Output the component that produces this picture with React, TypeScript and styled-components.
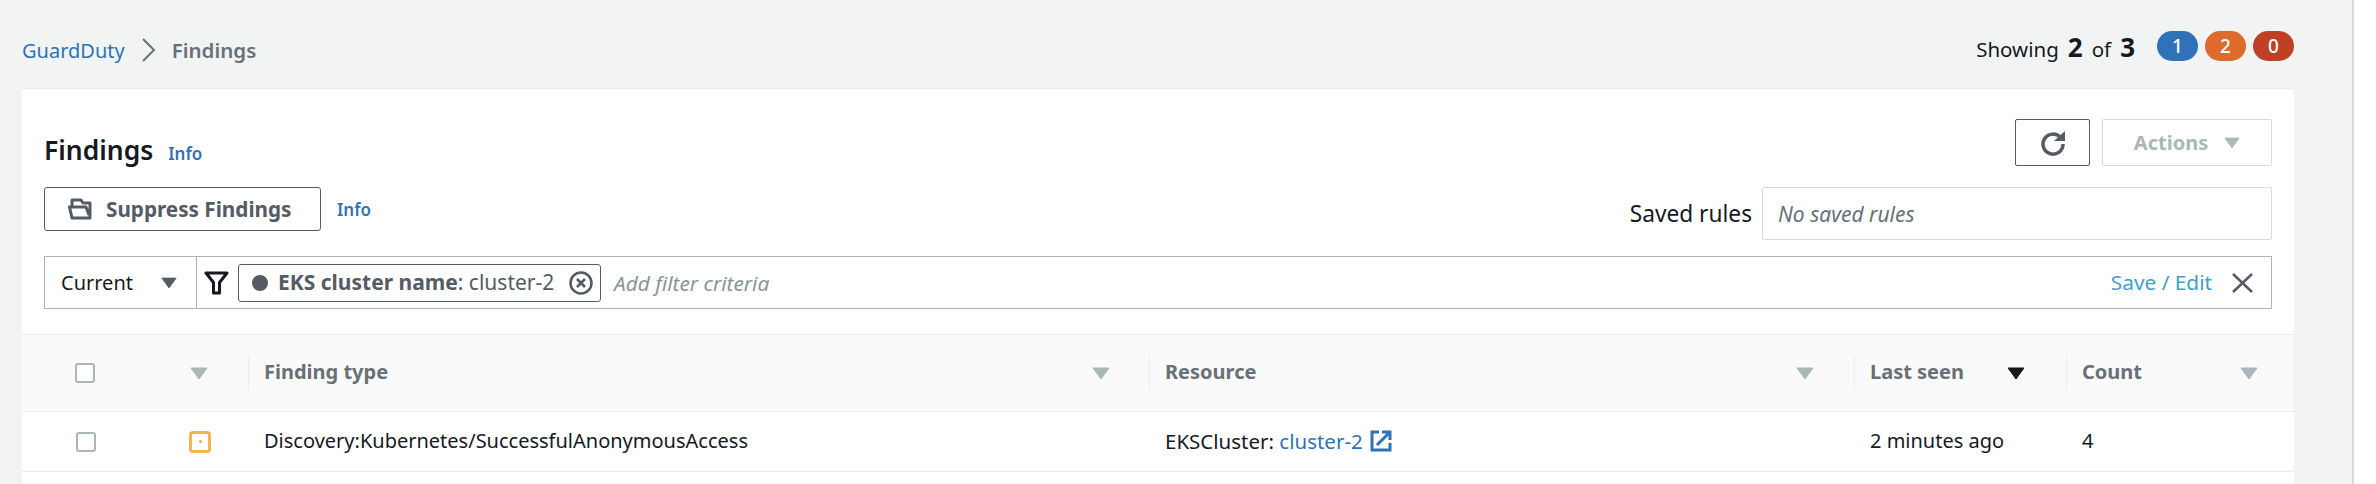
import React from 'react';
import styled, { createGlobalStyle } from 'styled-components';

const GlobalStyle = createGlobalStyle`
  html, body {
    margin: 0;
    height: 484px;
    overflow: hidden;
    background: #fff;
    font-family: "Noto Sans", "Open Sans", sans-serif;
    font-size: 20px;
    color: #16191f;
  }
  * { box-sizing: border-box; }
`;

const COLUMNS = '148px 78px 901px 705px 212px 228px';

const Page = styled.div`
  display: flex;
  width: 2376px;
  height: 484px;
  overflow: hidden;
`;

const Main = styled.main`
  width: 2354px;
  padding: 0 58px 0 22px;
  background: #f2f3f3;
  border-right: 2px solid #d5dbdb;
`;

const TopBar = styled.header`
  height: 88px;
  display: flex;
  justify-content: space-between;
  padding-top: 31px;
`;

const Breadcrumbs = styled.nav`
  display: flex;
  align-items: center;
  height: 38px;
  gap: 16px;
`;

const Link = styled.a`
  color: #2f72b8;
`;

const Current = styled.span`
  color: #687078;
  font-size: 20.5px;
  font-weight: 600;
`;

const Summary = styled.div`
  display: flex;
  align-items: flex-start;
  height: 30px;
`;

const Showing = styled.div`
  display: flex;
  align-items: baseline;
  gap: 9px;
  margin-top: 1px;
  margin-right: 22px;
  font-size: 20.5px;
  line-height: 30px;
  b { font-size: 26px; font-weight: 700; }
`;

const Badge = styled.span<{ $bg: string }>`
  width: 41px;
  height: 30px;
  margin-left: 7px;
  border-radius: 15px;
  background: ${({ $bg }) => $bg};
  color: #fff;
  font-size: 19px;
  font-weight: 500;
  display: flex;
  align-items: center;
  justify-content: center;
  &:first-of-type { margin-left: 0; }
`;

const Panel = styled.section`
  height: 396px;
  background: #fff;
  border-top: 1px solid #eaeded;
`;

const PanelHead = styled.div`
  padding: 30px 22px 25px;
  display: flex;
  flex-direction: column;
`;

const TitleRow = styled.div`
  display: flex;
  justify-content: space-between;
  align-items: center;
  height: 47px;
  margin-bottom: 21px;
`;

const TitleWrap = styled.div`
  display: flex;
  align-items: baseline;
  gap: 15px;
  padding-top: 15px;
`;

const Title = styled.h1`
  margin: 0;
  font-size: 26.5px;
  font-weight: 600;
`;

const InfoLink = styled(Link)`
  font-size: 17px;
  font-weight: 600;
`;

const Actions = styled.div`
  display: flex;
  gap: 12px;
`;

const IconButton = styled.button`
  width: 75px;
  height: 47px;
  padding: 0;
  background: #fff;
  border: 1px solid #545b64;
  border-radius: 2px;
  display: flex;
  align-items: center;
  justify-content: center;
`;

const DisabledButton = styled.button`
  width: 170px;
  height: 47px;
  background: #fff;
  border: 1px solid #d5dbdb;
  border-radius: 2px;
  color: #aab7b8;
  font: 700 20px "Noto Sans", sans-serif;
  display: flex;
  align-items: center;
  justify-content: center;
  gap: 16px;
`;

const ToolRow = styled.div`
  display: flex;
  justify-content: space-between;
  align-items: flex-start;
  height: 53px;
  margin-bottom: 16px;
`;

const SuppressWrap = styled.div`
  display: flex;
  align-items: center;
  height: 44px;
  gap: 16px;
`;

const SuppressButton = styled.button`
  width: 277px;
  height: 44px;
  padding: 0 0 0 23px;
  background: #fff;
  border: 1px solid #545b64;
  border-radius: 3px;
  color: #545b64;
  font: 700 20.7px "Noto Sans", sans-serif;
  display: flex;
  align-items: center;
  gap: 14px;
`;

const SavedRules = styled.div`
  display: flex;
  align-items: center;
  gap: 10px;
  font-size: 22.7px;
`;

const RulesInput = styled.div`
  width: 510px;
  height: 53px;
  padding-left: 15px;
  border: 1px solid #d5dbdb;
  border-radius: 2px;
  color: #687078;
  font-size: 21px;
  font-style: italic;
  display: flex;
  align-items: center;
`;

const FilterBar = styled.div`
  height: 53px;
  border: 1px solid #aab7b8;
  display: flex;
  align-items: center;
`;

const ScopeSelect = styled.div`
  width: 152px;
  height: 100%;
  padding: 0 19px 0 16px;
  border-right: 1px solid #aab7b8;
  display: flex;
  align-items: center;
  justify-content: space-between;
`;

const FunnelSlot = styled.div`
  width: 41px;
  padding-left: 7px;
  display: flex;
`;

const Chip = styled.div`
  width: 363px;
  height: 38px;
  margin-right: 13px;
  padding: 0 7px 0 13px;
  border: 1px solid #545b64;
  border-radius: 3px;
  color: #545b64;
  font-size: 21px;
  display: flex;
  align-items: center;
  b { font-weight: 700; }
`;

const ChipDot = styled.span`
  width: 16px;
  height: 16px;
  margin-right: 10px;
  border-radius: 50%;
  background: #545b64;
  flex: none;
`;

const ChipText = styled.span`
  flex: 1;
  margin-top: -2px;
  white-space: nowrap;
`;

const Placeholder = styled.span`
  flex: 1;
  color: #879596;
  font-size: 20.8px;
  font-style: italic;
`;

const SaveEdit = styled.a`
  color: #44a0c6;
  font-size: 20.8px;
  margin: -2px 20px 0 0;
`;

const CloseSlot = styled.span`
  display: flex;
  margin-right: 18px;
`;

const TableHeader = styled.div`
  display: grid;
  grid-template-columns: ${COLUMNS};
  align-items: center;
  height: 78px;
  background: #fafafa;
  border-top: 1px solid #eaeded;
  border-bottom: 1px solid #eaeded;
`;

const TableRow = styled.div`
  display: grid;
  grid-template-columns: ${COLUMNS};
  align-items: center;
  height: 60px;
  border-bottom: 1px solid #eaeded;
`;

const CheckCell = styled.div<{ $inset: number }>`
  padding-left: ${({ $inset }) => $inset}px;
  display: flex;
`;

const Checkbox = styled.span`
  width: 20px;
  height: 20px;
  background: #fff;
  border: 2px solid #aab7b8;
  border-radius: 3px;
`;

const CaretCell = styled.div`
  padding-left: 20px;
  display: flex;
`;

const HeadCell = styled.div<{ $inset: number }>`
  height: 34px;
  padding: 0 ${({ $inset }) => $inset}px 0 15px;
  border-left: 1px solid #eaeded;
  color: #687078;
  font-weight: 700;
  display: flex;
  align-items: center;
  justify-content: space-between;
  span { margin-top: -4px; }
`;

const SeverityCell = styled.div`
  padding-left: 19px;
  display: flex;
`;

const SeverityIcon = styled.span`
  width: 22px;
  height: 22px;
  border: 3.5px solid #efb54e;
  border-radius: 4px;
  display: flex;
  align-items: center;
  justify-content: center;
  &::after {
    content: '';
    width: 3px;
    height: 3px;
    border-radius: 50%;
    background: #f0a93a;
  }
`;

const BodyCell = styled.div`
  padding-left: 16px;
  margin-top: -2px;
  display: flex;
  align-items: center;
  white-space: nowrap;
`;

const ResourceCell = styled(BodyCell)`
  font-size: 20.5px;
`;

const ExternalIcon = styled.svg`
  margin-left: 7px;
`;

const Rail = styled.aside`
  flex: 1;
  background: #fff;
`;

const Caret = ({ color = '#aab7b8', w = 18, h = 13 }: { color?: string; w?: number; h?: number }) => (
  <svg width={w} height={h} viewBox="0 0 18 13">
    <path d="M1 1h16L9 12z" fill={color} stroke={color} strokeWidth="1" strokeLinejoin="round" />
  </svg>
);

const App: React.FC = () => (
  <Page>
    <GlobalStyle />
    <Main>
      <TopBar>
        <Breadcrumbs>
          <Link>GuardDuty</Link>
          <svg width="15" height="24" viewBox="0 0 15 24" fill="none">
            <path d="M2 1l11 11L2 23" stroke="#687078" strokeWidth="2" />
          </svg>
          <Current>Findings</Current>
        </Breadcrumbs>
        <Summary>
          <Showing>
            <span>Showing</span> <b>2</b> <span>of</span> <b>3</b>
          </Showing>
          <Badge $bg="#2f72b8">1</Badge>
          <Badge $bg="#dd6b2c">2</Badge>
          <Badge $bg="#bf4024">0</Badge>
        </Summary>
      </TopBar>
      <Panel>
        <PanelHead>
          <TitleRow>
            <TitleWrap>
              <Title>Findings</Title>
              <InfoLink>Info</InfoLink>
            </TitleWrap>
            <Actions>
              <IconButton aria-label="Refresh">
                <svg width="26" height="26" viewBox="0 0 26 26" fill="none">
                  <path d="M20.5 7.500A10 10 0 1 0 23 14" stroke="#545b64" strokeWidth="3.5" />
                  <path d="M25 1v10H14z" fill="#545b64" />
                </svg>
              </IconButton>
              <DisabledButton>
                Actions <Caret w={16} h={12} />
              </DisabledButton>
            </Actions>
          </TitleRow>
          <ToolRow>
            <SuppressWrap>
              <SuppressButton>
                <svg width="24" height="22" viewBox="0 0 24 22" fill="none" stroke="#545b64" strokeWidth="3" strokeLinejoin="round">
                  <path d="M4 9V2h9l2 3h7v15H4L1.5 9H18l3 8" />
                </svg>
                Suppress Findings
              </SuppressButton>
              <InfoLink>Info</InfoLink>
            </SuppressWrap>
            <SavedRules>
              <span>Saved rules</span>
              <RulesInput>No saved rules</RulesInput>
            </SavedRules>
          </ToolRow>
          <FilterBar>
            <ScopeSelect>
              <span>Current</span>
              <Caret color="#545b64" w={16} h={12} />
            </ScopeSelect>
            <FunnelSlot>
              <svg width="25" height="24" viewBox="0 0 25 24" fill="none">
                <path d="M2 2h21l-7.500 9.500V22H9.500V11.500z" stroke="#16191f" strokeWidth="3" strokeLinejoin="round" />
              </svg>
            </FunnelSlot>
            <Chip>
              <ChipDot />
              <ChipText>
                <b>EKS cluster name</b>: cluster-2
              </ChipText>
              <svg width="24" height="24" viewBox="0 0 24 24" fill="none" stroke="#545b64" strokeWidth="2.5">
                <circle cx="12" cy="12" r="10.500" />
                <path d="M8 8l8 8M16 8l-8 8" />
              </svg>
            </Chip>
            <Placeholder>Add filter criteria</Placeholder>
            <SaveEdit>Save / Edit</SaveEdit>
            <CloseSlot>
              <svg width="21" height="20" viewBox="0 0 21 20" fill="none" stroke="#545b64" strokeWidth="2.500">
                <path d="M1 1l19 18M20 1L1 19" />
              </svg>
            </CloseSlot>
          </FilterBar>
        </PanelHead>
        <TableHeader>
          <CheckCell $inset={53}>
            <Checkbox />
          </CheckCell>
          <CaretCell>
            <Caret />
          </CaretCell>
          <HeadCell $inset={39}>
            <span>Finding type</span> <Caret />
          </HeadCell>
          <HeadCell $inset={40}>
            <span>Resource</span> <Caret />
          </HeadCell>
          <HeadCell $inset={41}>
            <span>Last seen</span> <Caret color="#16191f" />
          </HeadCell>
          <HeadCell $inset={36}>
            <span>Count</span> <Caret />
          </HeadCell>
        </TableHeader>
        <TableRow>
          <CheckCell $inset={54}>
            <Checkbox />
          </CheckCell>
          <SeverityCell>
            <SeverityIcon />
          </SeverityCell>
          <BodyCell>Discovery:Kubernetes/SuccessfulAnonymousAccess</BodyCell>
          <ResourceCell>
            EKSCluster:&nbsp;<Link>cluster-2</Link>
            <ExternalIcon width="22" height="22" viewBox="0 0 22 22" fill="none" stroke="#2f72b8" strokeWidth="3">
              <path d="M9 2H2v18h18v-7" />
              <path d="M7 15L19 3M12 2h8v8" />
            </ExternalIcon>
          </ResourceCell>
          <BodyCell>2 minutes ago</BodyCell>
          <BodyCell>4</BodyCell>
        </TableRow>
      </Panel>
    </Main>
    <Rail />
  </Page>
);

export default App;
